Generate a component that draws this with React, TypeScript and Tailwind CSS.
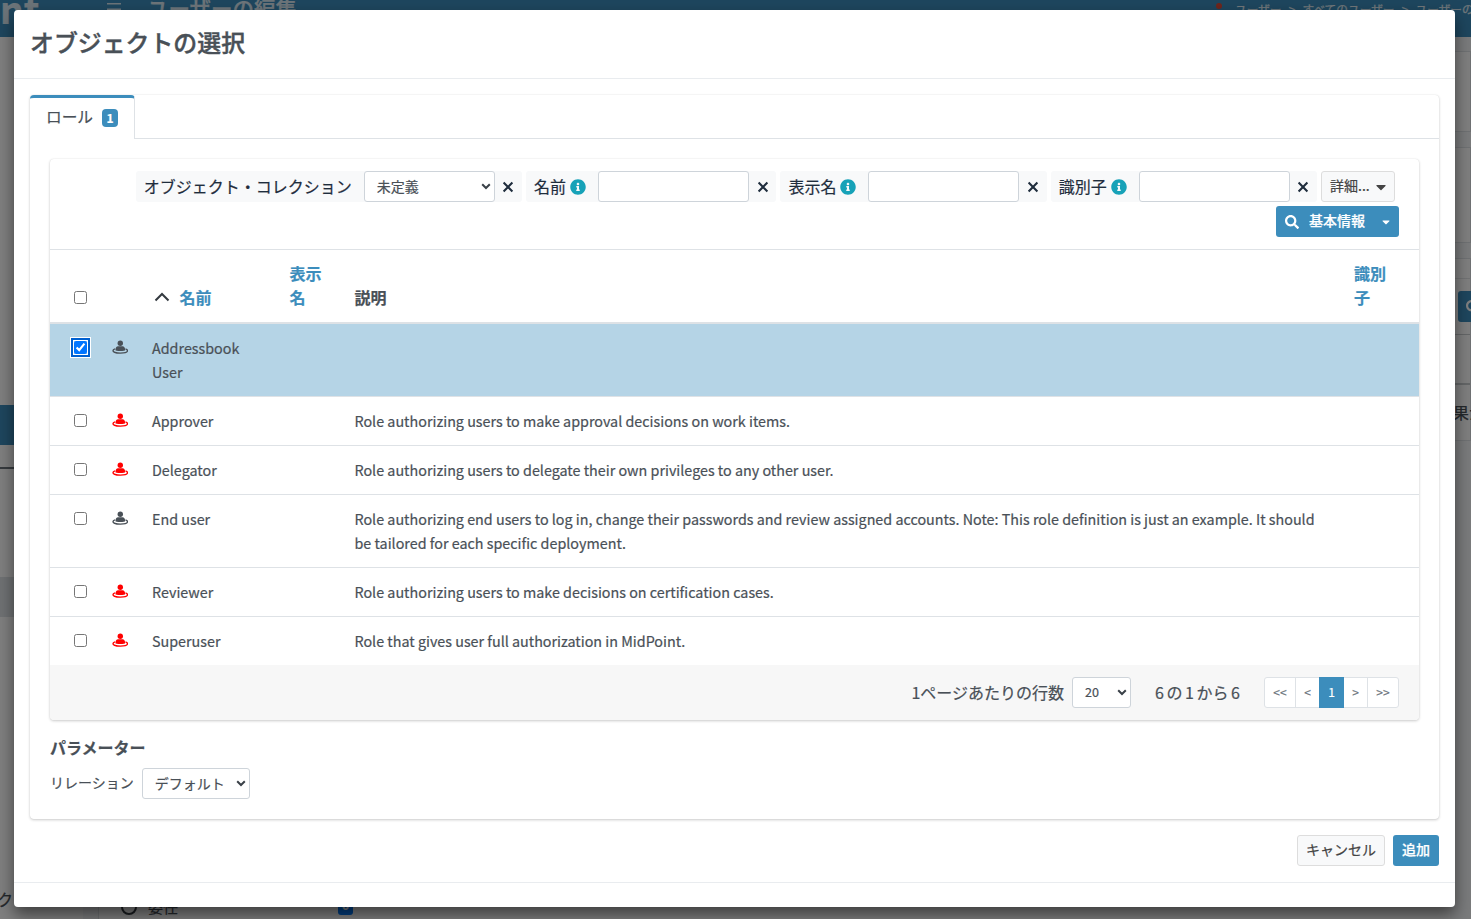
import type { ReactNode } from "react";
import { FaCaretDown, FaInfoCircle, FaSearch } from "react-icons/fa";

interface Role {
  name: string;
  description?: string;
  privileged?: boolean;
  selected?: boolean;
}

const roles: Role[] = [
  { name: "Addressbook User", selected: true },
  {
    name: "Approver",
    description: "Role authorizing users to make approval decisions on work items.",
    privileged: true,
  },
  {
    name: "Delegator",
    description: "Role authorizing users to delegate their own privileges to any other user.",
    privileged: true,
  },
  {
    name: "End user",
    description:
      "Role authorizing end users to log in, change their passwords and review assigned accounts. Note: This role definition is just an example. It should be tailored for each specific deployment.",
  },
  {
    name: "Reviewer",
    description: "Role authorizing users to make decisions on certification cases.",
    privileged: true,
  },
  {
    name: "Superuser",
    description: "Role that gives user full authorization in MidPoint.",
    privileged: true,
  },
];

function RoleIcon({ className }: { className: string }) {
  return (
    <svg viewBox="0 0 16 14" className={`h-3.5 w-4 ${className}`} fill="currentColor">
      <circle cx="8.3" cy="3.2" r="2.7" />
      <path d="M6 6.3h4.6c1.4 0 2.6 1.6 2.6 3.6 0 .7-2.1 1.2-4.9 1.2s-4.9-.5-4.9-1.2c0-2 1.2-3.6 2.6-3.6z" />
      <path
        d="M3 8.9C1.6 9.3 1 9.9 1 10.7c0 1.3 3.3 2.4 7.3 2.4s7.2-1.1 7.2-2.4c0-.8-.6-1.4-2-1.8"
        fill="none"
        stroke="currentColor"
        strokeWidth="1.4"
      />
    </svg>
  );
}

function Chevron({ className }: { className: string }) {
  return (
    <svg viewBox="0 0 10 7" className={`h-[7px] w-2.5 shrink-0 ${className}`} fill="none">
      <path d="M1.2 1.2 5 5l3.8-3.8" stroke="currentColor" strokeWidth="2" />
    </svg>
  );
}

function Select({ value, className }: { value: string; className: string }) {
  return (
    <button
      className={`flex h-[31px] items-center justify-between rounded-[3px] border border-[#ced4da] bg-white pr-[3px] pl-3 text-[#495057] ${className}`}
    >
      <span className="pb-0.5">{value}</span>
      <Chevron className="text-[#3a4148]" />
    </button>
  );
}

function SearchItem({ label, info, children }: { label: string; info?: boolean; children: ReactNode }) {
  return (
    <div className="flex h-[31px] items-center rounded-[3px] bg-[#f8f9fa] text-[#1f2d3d]">
      <span className="flex items-center gap-1 pr-3 pl-2 whitespace-nowrap">
        <span className="pb-0.5">{label}</span>
        {info && <FaInfoCircle className="text-[#17a2b8]" />}
      </span>
      {children}
      <span className="flex w-[27.3px] justify-center">
        <svg viewBox="0 0 12 12" className="mt-px size-3" fill="none">
          <path d="m1.6 1.6 8.8 8.8m0-8.8-8.8 8.8" stroke="currentColor" strokeWidth="2.1" />
        </svg>
      </span>
    </div>
  );
}

function TextInput() {
  return <input className="h-[31px] w-[151px] rounded-[3px] border border-[#ced4da] bg-white px-2" />;
}

function PageBehind() {
  return (
    <div className="flex h-[919px] flex-col overflow-hidden bg-[#f4f6f9]">
      <div className="flex h-[37px] shrink-0 items-start bg-[#3c8dbc] text-white/80">
        <div className="-mt-[14px] w-[107px] text-[37px] leading-[44px] font-bold">nt</div>
        <svg viewBox="0 0 14 14" className="mt-0.5 mr-[26px] size-3.5" fill="currentColor">
          <path d="M0 1h14v1.6H0zM0 6.4h14V8H0zM0 11.8h14v1.6H0z" />
        </svg>
        <div className="-mt-2 text-[21.5px] leading-8 font-medium">ユーザーの編集</div>
        <div className="-mt-[3px] ml-auto flex w-[255px] items-center overflow-hidden text-[11.7px] leading-6 whitespace-nowrap">
          <span className="mr-[13px] mb-1.5 size-1.5 shrink-0 rounded-full bg-[#dd4b39]" />
          <span>ユーザー</span>
          <span className="w-[21px] shrink-0 text-center">&gt;</span>
          <span>すべてのユーザー</span>
          <span className="w-[21px] shrink-0 text-center">&gt;</span>
          <span>ユーザーの編集</span>
        </div>
      </div>
      <div className="flex grow">
        <div className="flex w-[83px] flex-col bg-white">
          <div className="mt-[368px] h-10 bg-[#3c8dbc]" />
          <div className="mt-[22px] h-0.5 bg-[#6c757d]" />
          <div className="mt-[108px] h-10 bg-[#dee2e6]" />
          <div className="mt-[270px] -ml-[3px] text-base leading-6">ク</div>
        </div>
        <div className="ml-[15px] flex grow flex-col justify-end border-l border-[#dee2e6] bg-white">
          <div className="flex h-[23px] items-center pb-px pl-[22px] text-[15px]">
            <span className="mr-[11px] size-4 rounded-full border-2 border-[#343a40]" />
            委任
            <span className="mb-0.5 ml-[160px] h-[18px] w-[15px] rounded-[3px] bg-[#007bff] text-center text-xs leading-[16px] font-bold text-white">
              0
            </span>
          </div>
        </div>
        <div className="flex w-[21px] flex-col">
          <div className="mt-3.5 h-[81px] border border-[#dee2e6] bg-white" />
          <div className="mt-[15px] h-24 border border-[#dee2e6] bg-white" />
          <div className="mt-[15px] h-[183px] border border-[#dee2e6] bg-white">
            <div className="h-5 border-b border-[#e4e6e8]" />
            <div className="flex h-[56px] items-center border-b border-[#c8cccf] pl-[7px]">
              <div className="flex h-[31px] w-10 shrink-0 items-center rounded-[3px] bg-[#3c8dbc] pl-2 text-white">
                <FaSearch className="size-3.5" />
              </div>
            </div>
            <div className="h-[50px] border-b-2 border-[#c8cccf]" />
            <div className="pt-[15px] pl-0.5 text-base leading-6 whitespace-nowrap">果がありません</div>
          </div>
        </div>
      </div>
    </div>
  );
}

export default function App() {
  return (
    <div className="relative h-[919px] w-[1471px] overflow-hidden font-['Noto_Sans_CJK_JP',sans-serif] text-base leading-6 text-[#495057] [-webkit-text-stroke:0.2px]">
      <PageBehind />
      <div className="absolute inset-0 bg-black/50 px-3.5 pt-2.5">
        <div className="h-[897px] w-[1441px] rounded-[4px] bg-white shadow-[0_8px_16px_rgba(0,0,0,0.5)]">
          <div className="flex h-[69px] items-center border-b border-[#e9ecef] px-4">
            <h4 className="-mt-1 text-[23.9px] leading-9 font-medium [-webkit-text-stroke:0.4px]">
              オブジェクトの選択
            </h4>
          </div>

          <div className="px-4 pt-4">
            <div className="h-[724px] rounded-[4px] shadow-[0_0_1px_rgba(0,0,0,0.125),0_1px_3px_rgba(0,0,0,0.2)]">
              <div className="flex h-11 items-stretch border-b border-[#dee2e6]">
                <div className="-mb-px flex w-[105px] items-center rounded-t-[4px] border-t-3 border-r border-t-[#3c8dbc] border-r-[#dee2e6] bg-white pb-0.5 pl-4">
                  <span className="w-[47px] pb-px text-[15.7px] whitespace-nowrap">ロール</span>
                  <span className="ml-[9px] h-[18px] w-4 rounded-[4px] bg-[#3c8dbc] text-center text-xs leading-[17px] font-bold text-white">
                    1
                  </span>
                </div>
              </div>

              <div className="px-5 pt-5">
                <div className="overflow-hidden rounded-[4px] shadow-[0_0_1px_rgba(0,0,0,0.125),0_1px_3px_rgba(0,0,0,0.2)]">
                  <div className="flex h-[90px] flex-col items-end gap-1 pt-3 pr-5">
                    <div className="mr-1 flex gap-1">
                      <SearchItem label="オブジェクト・コレクション">
                        <Select value="未定義" className="w-[131px] text-sm" />
                      </SearchItem>
                      <SearchItem label="名前" info>
                        <TextInput />
                      </SearchItem>
                      <SearchItem label="表示名" info>
                        <TextInput />
                      </SearchItem>
                      <SearchItem label="識別子" info>
                        <TextInput />
                      </SearchItem>
                      <button className="flex h-[31px] w-[74px] items-center justify-between rounded-[3px] border border-[#ddd] bg-[#f8f9fa] pr-[5px] pl-2 text-sm text-[#444]">
                        <span className="pb-1">詳細...</span>
                        <FaCaretDown className="size-4" />
                      </button>
                    </div>
                    <button className="flex h-[31px] w-[123px] items-center rounded-[3px] bg-[#3c8dbc] pl-[9px] text-sm font-medium text-white">
                      <FaSearch />
                      <span className="ml-2.5 pb-1">基本情報</span>
                      <FaCaretDown className="ml-[15px] size-3" />
                    </button>
                  </div>

                  <table className="w-full table-fixed border-separate border-spacing-0 text-left">
                    <colgroup>
                      <col className="w-[50px]" />
                      <col className="w-10" />
                      <col className="w-[137.5px]" />
                      <col className="w-[65px]" />
                      <col />
                      <col className="w-[77px]" />
                    </colgroup>
                    <thead>
                      <tr className="align-bottom text-[#3c8dbc] [&>th]:border-t [&>th]:border-b-2 [&>th]:border-[#dee2e6] [&>th]:pt-[11px] [&>th]:pb-[13px] [&>th]:pl-3">
                        <th>
                          <input type="checkbox" className="mb-[5px] ml-3 block size-[13px]" />
                        </th>
                        <th />
                        <th>
                          <span className="flex items-center">
                            <svg viewBox="0 0 16 10" className="mr-[9.5px] ml-0.5 h-2.5 w-4" fill="none">
                              <path d="m1.5 8.5 6.5-6.5 6.5 6.5" stroke="#343a40" strokeWidth="2" />
                            </svg>
                            名前
                          </span>
                        </th>
                        <th className="pr-3">表示名</th>
                        <th className="text-[#495057]">説明</th>
                        <th className="pr-8">識別子</th>
                      </tr>
                    </thead>
                    <tbody>
                      {roles.map((role, i) => (
                        <tr
                          key={role.name}
                          className={`align-top text-[14.33px] [&>td]:py-3 [&>td]:pl-3 ${
                            role.selected ? "bg-[#b5d4e6]" : ""
                          } ${i > 0 ? "[&>td]:border-t [&>td]:border-[#dee2e6]" : ""}`}
                        >
                          <td>
                            <input
                              type="checkbox"
                              defaultChecked={role.selected}
                              className={`mt-[5px] ml-3 block size-[13px] ${
                                role.selected
                                  ? "rounded-[2px] shadow-[0_0_0_1px_#fff,0_0_0_3px_#0060d0,0_0_0_4px_#fff]"
                                  : ""
                              }`}
                            />
                          </td>
                          <td>
                            <RoleIcon
                              className={role.privileged ? "mt-1 text-[#f00]" : "mt-1 text-[#495057]"}
                            />
                          </td>
                          <td className="pr-6">{role.name}</td>
                          <td />
                          <td className="pr-5">{role.description}</td>
                          <td />
                        </tr>
                      ))}
                    </tbody>
                  </table>

                  <div className="flex h-[55px] items-center justify-end bg-[#f7f7f7] pr-5">
                    <span className="pb-0.5">1ページあたりの行数</span>
                    <Select value="20" className="ml-2 w-[59px] text-[12.6px]" />
                    <span className="mr-6 ml-6 pb-px [word-spacing:-1px]">6 の 1 から 6</span>
                    <div className="flex h-[31px] items-stretch rounded-[3px] border border-[#dee2e6] bg-white text-xs leading-[27px] text-[#6c757d]">
                      <span className="w-[31px] border-r border-[#dee2e6] text-center">&lt;&lt;</span>
                      <span className="w-[23px] text-center">&lt;</span>
                      <span className="-my-px w-[25px] bg-[#3c8dbc] text-center leading-[29px] text-white">1</span>
                      <span className="w-6 border-r border-[#dee2e6] text-center">&gt;</span>
                      <span className="w-[30px] text-center">&gt;&gt;</span>
                    </div>
                  </div>
                </div>

                <div className="pt-[15px] font-bold">パラメーター</div>
                <div className="mt-[9px] flex items-center gap-2">
                  <span className="pb-1 text-sm">リレーション</span>
                  <Select value="デフォルト" className="w-[108px] text-sm" />
                </div>
              </div>
            </div>

            <div className="flex justify-end gap-2 pt-4 text-sm">
              <button className="h-[31px] w-[88px] rounded-[3px] border border-[#ddd] bg-[#f8f9fa] pb-1 text-[#444]">
                キャンセル
              </button>
              <button className="h-[31px] w-[46px] rounded-[3px] bg-[#3c8dbc] pb-1 font-medium text-white">追加</button>
            </div>
          </div>
          <div className="mt-4 border-t border-[#e9ecef]" />
        </div>
      </div>
    </div>
  );
}
